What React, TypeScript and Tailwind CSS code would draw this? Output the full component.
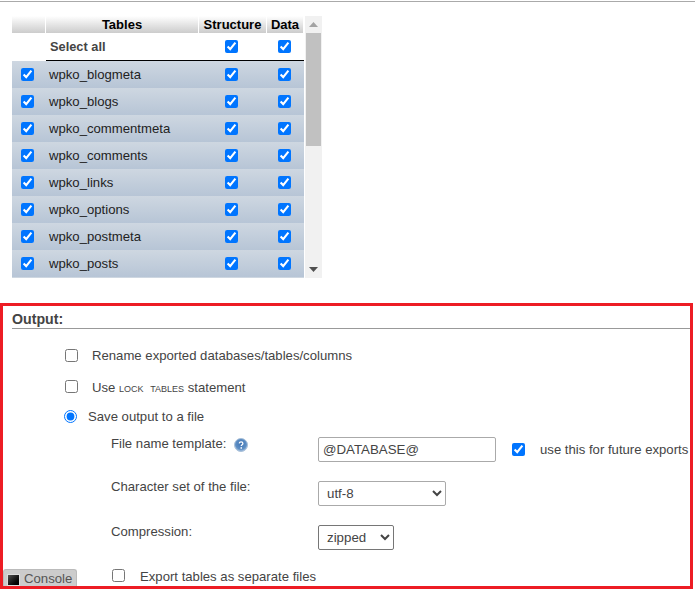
import type { ReactNode } from "react";

const tables = [
  "wpko_blogmeta",
  "wpko_blogs",
  "wpko_commentmeta",
  "wpko_comments",
  "wpko_links",
  "wpko_options",
  "wpko_postmeta",
  "wpko_posts",
];

const cols = "grid grid-cols-[34px_153px_68px_37px]";

function Check() {
  return <input type="checkbox" defaultChecked className="m-0 block h-[13px] w-[13px]" />;
}

function Centered({ children }: { children?: ReactNode }) {
  return <div className="flex items-center justify-center pr-[3px]">{children}</div>;
}

function HeadCell({ children }: { children?: ReactNode }) {
  return (
    <div className="border-r border-white bg-gradient-to-b from-white to-[#cccccc] text-center text-[13px] leading-[17px] font-bold text-black">
      {children}
    </div>
  );
}

function TableList() {
  return (
    <div className="ml-3 mt-[14px] flex h-[262px] w-[311px]">
      <div className="h-full w-[292px] overflow-hidden">
        <div className={`${cols} h-[17px]`}>
          <HeadCell />
          <HeadCell>Tables</HeadCell>
          <HeadCell>Structure</HeadCell>
          <HeadCell>Data</HeadCell>
        </div>
        <div className={`${cols} h-[28px]`}>
          <div />
          <div className="col-span-3 grid grid-cols-[153px_68px_37px] border-b border-black">
            <div className="pl-1 text-[12.8px] leading-[27px] font-bold text-[#444444]">Select all</div>
            <Centered>
              <Check />
            </Centered>
            <Centered>
              <Check />
            </Centered>
          </div>
        </div>
        {tables.map((name) => (
          <div key={name} className={`${cols} h-[27px] bg-gradient-to-b from-[#ced7e1] to-[#b7c5d6]`}>
            <Centered>
              <Check />
            </Centered>
            <div className="pl-[3px] text-[13.15px] leading-[27px] text-[#222222]">{name}</div>
            <Centered>
              <Check />
            </Centered>
            <Centered>
              <Check />
            </Centered>
          </div>
        ))}
        <div className="h-px bg-[#ced7e1]" />
      </div>
      {/* scrollbar */}
      <div className="ml-px flex h-full w-[17px] flex-col items-center bg-[#f1f1f1]">
        <div className="flex h-[17px] items-center justify-center">
          <svg width="9" height="5" viewBox="0 0 9 5">
            <path d="M4.5 0 9 5H0z" fill="#a3a3a3" />
          </svg>
        </div>
        <div className="h-[113px] w-[15px] bg-[#c1c1c1]" />
        <div className="mt-auto flex h-[17px] items-center justify-center">
          <svg width="9" height="5" viewBox="0 0 9 5">
            <path d="M0 0h9L4.5 5z" fill="#505050" />
          </svg>
        </div>
      </div>
    </div>
  );
}

function HelpIcon() {
  return (
    <svg width="14" height="14" viewBox="0 0 14 14" className="ml-2 mt-px shrink-0">
      <defs>
        <radialGradient id="help" cx="50%" cy="40%" r="60%">
          <stop offset="0%" stopColor="#3f74b4" />
          <stop offset="70%" stopColor="#5f8fc4" />
          <stop offset="100%" stopColor="#a9c4e0" />
        </radialGradient>
      </defs>
      <circle cx="7" cy="7" r="6.5" fill="url(#help)" stroke="#a8bfd8" />
      <path d="M5.200 5.400c.2-1 1-1.500 1.900-1.500 1 0 1.800.6 1.800 1.500 0 1.300-1.700 1.300-1.700 2.700" fill="none" stroke="#fff" strokeWidth="1.300" />
      <rect x="6.500" y="9.200" width="1.500" height="1.500" fill="#fff" />
    </svg>
  );
}

function Console() {
  return (
    <div className="absolute bottom-0 left-0 flex h-[17px] w-[74px] items-center rounded-t-[3px] border border-b-0 border-[#bbbbbb] bg-[#cccccc] pl-[3px] text-[13.2px] text-[#555555]">
      <span className="mt-[3px] h-3 w-[13px] border border-[#dddddd] bg-gradient-to-br from-[#555555] to-black" />
      <span className="ml-1 leading-[17px]">Console</span>
    </div>
  );
}

export default function App() {
  return (
    <div className="h-[589px] w-[695px] overflow-hidden bg-white font-['Liberation_Sans',Arial,sans-serif] text-[13.15px] text-[#444444]">
      <div className="mt-px h-px w-full bg-[#aaaaaa]" />
      <TableList />

      <section className="relative mt-[25px] h-[286px] w-[693px] overflow-hidden border-[3px] border-[#ed1c24]">
        <div className="ml-[9px] mt-[3px] h-[20px] border-b border-[#999999] text-[14.200px] leading-[21px] font-bold text-[#444444]">
          Output:
        </div>

        <label className="ml-[62px] mt-5 flex h-[13px] items-center">
          <input type="checkbox" className="m-0 h-[13px] w-[13px]" />
          <span className="ml-[14px] pt-px">Rename exported databases/tables/columns</span>
        </label>

        <label className="ml-[62px] mt-[18px] flex h-[13px] items-center">
          <input type="checkbox" className="m-0 h-[13px] w-[13px]" />
          <span className="ml-[14px] pt-[3px]">
            Use <span className="[font-variant:small-caps] [word-spacing:3px]">lock tables</span> statement
          </span>
        </label>

        <label className="ml-[61px] mt-[17px] flex h-[13px] items-center">
          <input type="radio" name="output" defaultChecked className="m-0 h-[13px] w-[13px]" />
          <span className="ml-[11px] pt-px">Save output to a file</span>
        </label>

        <div className="ml-[108px] mt-[14px] flex h-[25px]">
          <div className="flex w-[207px] shrink-0">
            <span className="leading-[14px]">File name template:</span>
            <HelpIcon />
          </div>
          <input
            type="text"
            defaultValue="@DATABASE@"
            className="h-[25px] w-[178px] shrink-0 rounded-[2px] border border-[#aaaaaa] px-1 text-[13.3px] text-[#444444]"
          />
          <input type="checkbox" defaultChecked className="m-0 ml-4 mt-[6px] h-[13px] w-[13px] shrink-0" />
          <span className="ml-[15px] leading-[25px] whitespace-nowrap">use this for future exports</span>
        </div>

        <div className="ml-[108px] mt-[19px] flex h-[25px]">
          <span className="w-[207px] shrink-0 leading-[12px]">Character set of the file:</span>
          <select className="h-[25px] w-[128px] rounded-[2px] border border-[#aaaaaa] bg-white pl-1 text-[13.3px] text-[#444444]">
            <option>utf-8</option>
          </select>
        </div>

        <div className="ml-[108px] mt-[19px] flex h-[25px]">
          <span className="w-[207px] shrink-0 leading-[13px]">Compression:</span>
          <select className="h-[25px] w-[76px] rounded-[2px] border border-[#767676] bg-white pl-1 text-[13.3px] text-[#444444]">
            <option>zipped</option>
          </select>
        </div>

        <label className="ml-[109px] mt-[19px] flex h-[13px] items-center">
          <input type="checkbox" className="m-0 h-[13px] w-[13px]" />
          <span className="ml-[15px] pt-[2px]">Export tables as separate files</span>
        </label>

        <Console />
      </section>
    </div>
  );
}
